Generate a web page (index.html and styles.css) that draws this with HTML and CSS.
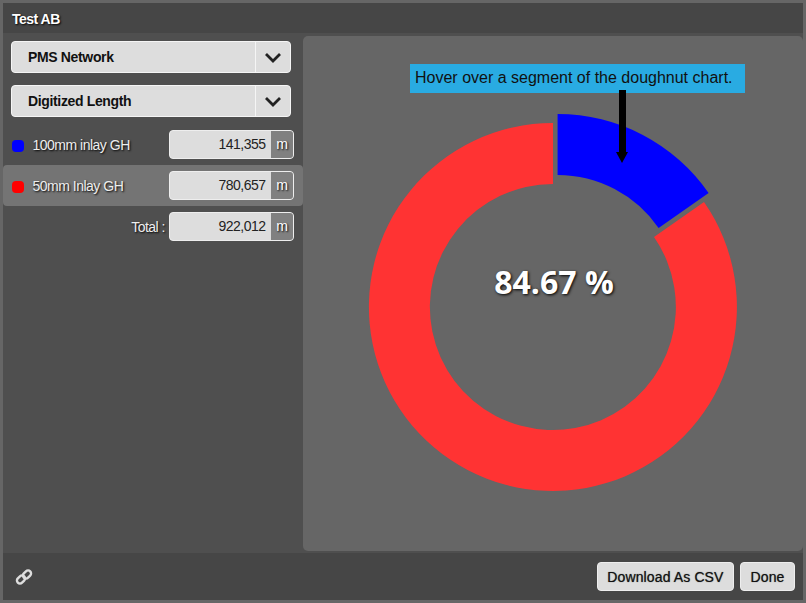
FILE: index.html
```html
<!DOCTYPE html>
<html lang="en">
<head>
    <meta charset="UTF-8">
    <title>Test AB</title>
    <link rel="stylesheet" href="styles.css">
</head>
<body>

<div class="dialog">
    <div class="title">Test AB</div>

    <div class="content">
        <div class="side">
            <div class="select">
                <span class="select-text">PMS Network</span>
                <span class="select-btn"><svg width="18" height="11" viewBox="0 0 18 11"><path d="M2 2 L9 9 L16 2" fill="none" stroke="#222" stroke-width="2.8"/></svg></span>
            </div>
            <div class="select">
                <span class="select-text">Digitized Length</span>
                <span class="select-btn"><svg width="18" height="11" viewBox="0 0 18 11"><path d="M2 2 L9 9 L16 2" fill="none" stroke="#222" stroke-width="2.8"/></svg></span>
            </div>

            <div class="rows">
                <div class="row">
                    <span class="dot blue"></span>
                    <span class="row-label">100mm inlay GH</span>
                    <div class="value"><span class="num">141,355</span><span class="unit">m</span></div>
                </div>
                <div class="row active">
                    <span class="dot red"></span>
                    <span class="row-label">50mm Inlay GH</span>
                    <div class="value"><span class="num">780,657</span><span class="unit">m</span></div>
                </div>
                <div class="row total">
                    <span class="row-label">Total :</span>
                    <div class="value"><span class="num">922,012</span><span class="unit">m</span></div>
                </div>
            </div>
        </div>

        <div class="chart">
            <svg class="doughnut" width="500" height="515" viewBox="0 0 500 515">
                <!-- red first, blue segment is pulled out by 10px -->
                <path fill="#ff3333" d="M250 87 A184 184 0 1 0 401 166 L351 201 A123 123 0 1 1 250 148 Z"/>
                <path fill="#0000ff" d="M254.6 78 A184 184 0 0 1 405.6 157 L355.6 192 A123 123 0 0 0 254.6 139 Z"/>
            </svg>
            <div class="percent">84.67 %</div>
            <div class="hint">Hover over a segment of the doughnut chart.</div>
            <div class="arrow"></div>
        </div>
    </div>

    <div class="footer">
        <svg class="link-icon" width="18" height="18" viewBox="0 0 18 18"><g fill="none" stroke="#ddd" stroke-width="2.4"><rect x="1.5" y="8.5" width="9" height="6" rx="3" transform="rotate(-45 6 11.5)"/><rect x="7.5" y="3.5" width="9" height="6" rx="3" transform="rotate(-45 12 6.5)"/></g></svg>
        <div class="buttons">
            <button>Download As CSV</button>
            <button>Done</button>
        </div>
    </div>
</div>

</body>
</html>
```

FILE: styles.css
```css
body {
    margin: 0;
    background: #666;
    font-family: "Liberation Sans", Arial, sans-serif;
}

.dialog {
    width: 800px;
    height: 597px;
    margin: 3px;
    background: #4f4f4f;
    display: flex;
    flex-direction: column;
}

.title {
    height: 30px;
    line-height: 32px;
    padding-left: 9px;
    background: #464646;
    color: #fff;
    font-size: 14px;
    font-weight: bold;
    letter-spacing: -0.5px;
    text-shadow: 1px 1px 2px #000;
}

.content {
    flex: 1;
    display: flex;
    padding-top: 3px;
}

.side {
    width: 300px;
    padding-top: 5px;
}

.select {
    height: 32px;
    margin: 0 12px 12px 8px;
    box-sizing: border-box;
    display: flex;
    background: #ddd;
    border: 1px solid #f5f5f5;
    border-radius: 4px;
    color: #111;
    font-size: 14px;
    font-weight: bold;
    letter-spacing: -0.35px;
}

.select-text {
    flex: 1;
    line-height: 30px;
    padding-left: 16px;
}

.select-btn {
    width: 34px;
    border-left: 1px solid #f5f5f5;
    display: flex;
    align-items: center;
    justify-content: center;
}

.rows {
    margin-top: -5px;
}

.row {
    height: 41px;
    display: flex;
    align-items: center;
    color: #eee;
    font-size: 14px;
    letter-spacing: -0.5px;
    text-shadow: 1px 1px 2px #000;
}

.row.active {
    background: #747474;
    border-radius: 4px;
}

.row.total {
    justify-content: flex-end;
}

.dot {
    width: 12px;
    height: 12px;
    margin: 3px 0 0 9px;
    border-radius: 4px;
}

.dot.blue {
    background: #0000ff;
}

.dot.red {
    background: #ff0000;
}

.row-label {
    flex: 1;
    padding-left: 8.5px;
}

.total .row-label {
    flex: none;
    margin-right: 4px;
}

.value {
    width: 125px;
    height: 29px;
    margin-right: 9px;
    display: flex;
    box-sizing: border-box;
    background: #ddd;
    border: 1px solid #eee;
    border-radius: 4px;
    color: #222;
    overflow: hidden;
}

.num {
    flex: 1;
    line-height: 27px;
    text-align: right;
    padding-right: 5.5px;
    text-shadow: none;
}

.unit {
    width: 22px;
    line-height: 27px;
    text-align: center;
    background: #808080;
    color: #fff;
    letter-spacing: 0;
}

.chart {
    position: relative;
    width: 500px;
    height: 515px;
    background: #666;
    border-radius: 5px;
}

.doughnut {
    display: block;
}

.percent {
    position: absolute;
    left: 2px;
    right: 0;
    top: 224px;
    text-align: center;
    color: #fff;
    font-family: "Open Sans", sans-serif;
    font-size: 32px;
    font-weight: bold;
    text-shadow: 1px 1px 3px #000;
}

.hint {
    position: absolute;
    left: 107px;
    top: 28px;
    width: 335px;
    height: 29px;
    line-height: 28px;
    padding-left: 5px;
    box-sizing: border-box;
    background: #29abe2;
    color: #111;
    font-size: 16px;
}

.arrow {
    position: absolute;
    left: 316px;
    top: 54px;
    width: 7px;
    height: 62px;
    background: #000;
}

.arrow::after {
    content: "";
    position: absolute;
    left: -3px;
    top: 62px;
    border-left: 6.5px solid transparent;
    border-right: 6.5px solid transparent;
    border-top: 11px solid #000;
}

.footer {
    height: 47px;
    display: flex;
    align-items: center;
    justify-content: space-between;
    background: #464646;
    padding: 0 8px 0 12px;
}

.buttons {
    display: flex;
    gap: 6px;
}

button {
    height: 29px;
    padding: 1px 9.5px 0;
    background: #ddd;
    border: 1px solid #eee;
    border-radius: 4px;
    color: #111;
    font-family: "Liberation Sans", Arial, sans-serif;
    font-size: 14px;
    letter-spacing: 0.12px;
    text-shadow: 0 0 1px #555;
}
```
